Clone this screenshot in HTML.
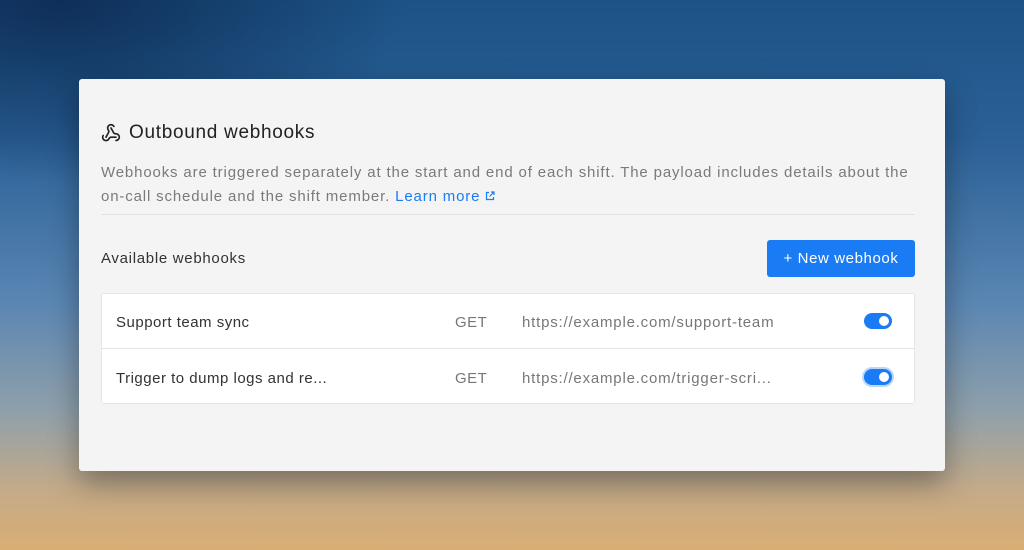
<!DOCTYPE html>
<html><head><style>
*{box-sizing:border-box;margin:0;padding:0}
body{width:1024px;height:550px;overflow:hidden;font-family:"Liberation Sans",sans-serif;position:relative;letter-spacing:0.5px;
background:
radial-gradient(ellipse 500px 260px at 60px 0px,rgba(12,40,80,.85),rgba(12,40,80,0) 70%),
linear-gradient(180deg,#1c5386 0%,#2a6096 25%,#5a86b3 55%,#90a0aa 75%,#c7ab86 90%,#d8ae75 100%);}
.card{position:absolute;left:79px;top:79px;width:866px;height:392px;background:#f4f4f4;border-radius:3px;box-shadow:0 12px 30px rgba(0,0,0,.35)}
.t{position:absolute;left:101px;top:122px;font-size:19px;color:#222;display:flex;align-items:center;gap:8px;letter-spacing:0.7px}
.d{position:absolute;left:101px;top:161px;width:840px;font-size:15px;line-height:24px;color:#7a7a7a;letter-spacing:0.85px}
.d a{color:#1a7cf5;text-decoration:none}
.hr{position:absolute;left:101px;top:214px;width:814px;height:1px;background:#e2e2e2}
.av{position:absolute;left:101px;top:250px;font-size:15px;color:#333;letter-spacing:0.7px}
.btn{position:absolute;left:767px;top:240px;width:148px;height:37px;background:#1a7cf5;border-radius:3px;color:#fff;font-size:15px;text-align:center;line-height:37px;letter-spacing:0.6px}
.tb{position:absolute;left:101px;top:293px;width:814px;height:111px;background:#fff;border:1px solid #e6e6e6;border-radius:3px}
.row{position:absolute;left:0;width:812px;height:55px;font-size:15px}
.row span{position:absolute;top:20px}
.n{left:14px;color:#333}.m{left:353px;color:#777}.u{left:420px;color:#777;letter-spacing:0.8px}
.tg{position:absolute;left:762px;top:19px;width:28px;height:16px;border-radius:8px;background:#1a7cf5}
.tg:after{content:"";position:absolute;right:3px;top:3px;width:10px;height:10px;border-radius:50%;background:#fff}
</style></head><body>
<div class="card"></div>
<div class="t"><svg width="20" height="20" viewBox="0 0 24 24" fill="none" stroke="#222" stroke-width="2" stroke-linecap="round" stroke-linejoin="round"><path d="M18 16.98h-5.99c-1.1 0-1.950.94-2.48 1.9A4 4 0 0 1 2 17c.01-.7.2-1.4.57-2"/><path d="m6 17 3.13-5.78c.53-.97.1-2.18-.5-3.1a4 4 0 1 1 6.89-4.06"/><path d="m12 6 3.13 5.73C15.66 12.7 16.9 13 18 13a4 4 0 0 1 0 8"/></svg>Outbound webhooks</div>
<div class="d">Webhooks are triggered separately at the start and end of each shift. The payload includes details about the<br>on-call schedule and the shift member. <a>Learn more <svg width="10" height="10" viewBox="0 0 10 10" fill="none" stroke="#1a7cf5" stroke-width="1.2"><path d="M4 1.5H1.5v7h7V6M6 1h3v3M9 1 4.5 5.5"/></svg></a></div>
<div class="hr"></div>
<div class="av">Available webhooks</div>
<div class="btn">+ New webhook</div>
<div class="tb">
<div class="row" style="top:0;border-bottom:1px solid #e6e6e6"><span class="n">Support team sync</span><span class="m">GET</span><span class="u">https://example.com/support-team</span><div class="tg"></div></div>
<div class="row" style="top:56px"><span class="n">Trigger to dump logs and re...</span><span class="m">GET</span><span class="u">https://example.com/trigger-scri...</span><div class="tg" style="box-shadow:0 0 0 2px #bcd7fb"></div></div>
</div>
</body></html>
